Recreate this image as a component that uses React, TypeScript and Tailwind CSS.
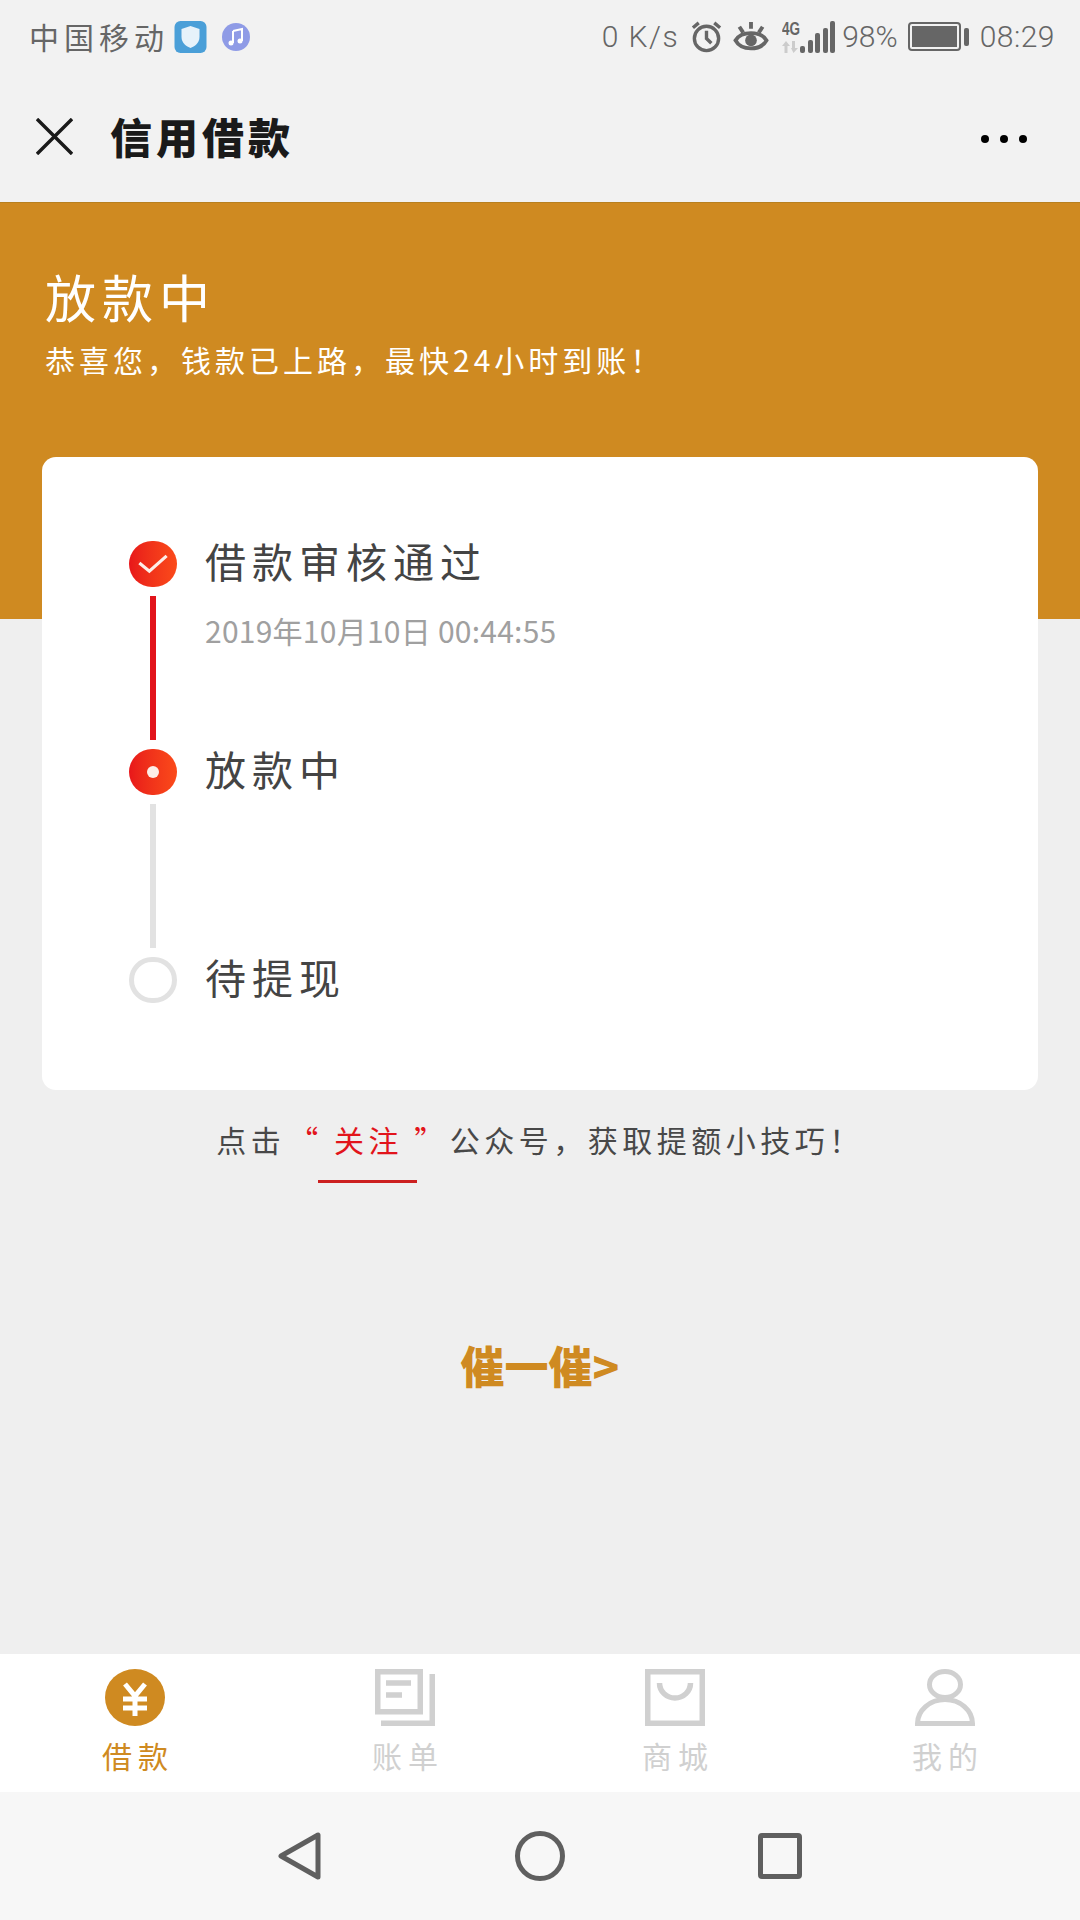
import type { ReactNode } from "react";

const cjk = "font-['Noto_Sans_CJK_SC','Noto_Sans',sans-serif]";

function StatusBar() {
  return (
    <div className="flex h-[70px] items-center justify-between bg-[#f2f2f2] pl-[29px] pr-[25px] pt-[3px] text-[#666666]">
      <div className="flex items-center">
        <span className={`${cjk} -mt-[2px] text-[30px] leading-none tracking-[5px]`}>中国移动</span>
        <svg viewBox="0 0 32 32" className="ml-[5px] h-8 w-[33px]">
          <rect width="32" height="32" rx="6" fill="#4a9fd8" />
          <path d="M16 5 L25 8 V16 C25 22 20 25.500 16 27 C12 25.500 7 22 7 16 V8 Z" fill="#e6f2fa" />
        </svg>
        <svg viewBox="0 0 32 32" className="ml-[13px] h-8 w-8">
          <circle cx="16" cy="16" r="14" fill="#8f9be6" />
          <path d="M13 10 L22 8 V20" fill="none" stroke="#ffffff" strokeWidth="2" />
          <path d="M13 10 V22" fill="none" stroke="#ffffff" strokeWidth="2" />
          <circle cx="11" cy="22" r="2.500" fill="#ffffff" />
          <circle cx="20" cy="20" r="2.500" fill="#ffffff" />
        </svg>
      </div>
      <div className="flex items-center font-['Roboto',sans-serif] text-[30px] font-light leading-none">
        <span className="tracking-[1.500px]">0 K/s</span>
        <svg viewBox="0 0 32 34" className="ml-[11px] h-[33px] w-[33px]" fill="none" stroke="#666666" strokeWidth="3.500">
          <circle cx="16" cy="19" r="12.500" />
          <path d="M16 11 V19 L21 24" />
          <path d="M2 8 L8 3 M30 8 L24 3" />
        </svg>
        <svg viewBox="0 0 36 34" className="ml-[9px] h-[33px] w-[38px]" fill="none" stroke="#666666" strokeWidth="4">
          <path d="M2 21 C8 11 28 11 34 21 C28 32 8 32 2 21 Z" />
          <circle cx="18" cy="21" r="6" fill="#666666" stroke="none" />
          <path d="M18 2 V9 M6 7 L10 13 M30 7 L26 13" />
        </svg>
        <div className="relative ml-[12px] h-[33px] w-[18px]">
          <span className="absolute left-0 top-0 origin-top-left scale-x-75 font-['Liberation_Sans',sans-serif] text-[18px] font-bold leading-none">4G</span>
          <svg viewBox="0 0 18 12" className="absolute bottom-0 left-0 h-3 w-[18px]" fill="#cccccc">
            <path d="M4 0 L8 5 H5.500 V12 H2.500 V5 H0 Z M10 0 H13 V7 H16 L11.500 12 L9 7 H10 Z" />
          </svg>
        </div>
        <div className="flex h-[33px] items-end gap-[2.500px]">
          <div className="h-[7px] w-[5px] rounded-[2px] bg-[#666666]" />
          <div className="h-[13px] w-[5px] rounded-[2px] bg-[#666666]" />
          <div className="h-[20px] w-[5px] rounded-[2px] bg-[#666666]" />
          <div className="h-[25px] w-[5px] rounded-[2px] bg-[#666666]" />
          <div className="h-[32px] w-[5px] rounded-[2px] bg-[#666666]" />
        </div>
        <span className="ml-[7px]">98%</span>
        <div className="ml-[10px] h-[29px] w-[53px] rounded-[4px] border-2 border-[#666666] p-[2px]">
          <div className="h-full w-full bg-[#666666]" />
        </div>
        <div className="ml-[3px] h-[18px] w-[5px] rounded-[2px] bg-[#666666]" />
        <span className="ml-[11px] tracking-[0.5px]">08:29</span>
      </div>
    </div>
  );
}

function Header() {
  return (
    <div className="flex h-[132px] items-center justify-between bg-[#f2f2f2] pl-[36px] pr-[53px]">
      <div className="flex items-center">
        <svg viewBox="0 0 38 38" className="h-[37px] w-[37px]" stroke="#1a1a1a" strokeWidth="3.500">
          <path d="M1 1 L37 37 M37 1 L1 37" />
        </svg>
        <span className={`${cjk} ml-[37px] text-[42px] font-black leading-none tracking-[4px] text-[#1a1a1a]`}>信用借款</span>
      </div>
      <div className="mt-[5px] flex gap-[11px]">
        <div className="h-2 w-2 rounded-full bg-black" />
        <div className="h-2 w-2 rounded-full bg-black" />
        <div className="h-2 w-2 rounded-full bg-black" />
      </div>
    </div>
  );
}

type StepProps = {
  state: "done" | "active" | "todo";
  title: string;
  time?: string;
  line?: "red" | "gray";
};

function Step({ state, title, time, line }: StepProps) {
  return (
    <div className="flex">
      <div className="flex w-12 flex-col items-center">
        {state === "todo" ? (
          <div className="h-[46px] w-12 rounded-full border-[5px] border-[#e2e2e2]" />
        ) : (
          <div className="flex h-[46px] w-12 items-center justify-center rounded-full bg-gradient-to-r from-[#e8161a] to-[#fb4a1a]">
            {state === "done" ? (
              <svg viewBox="0 0 32 22" className="h-[20px] w-[30px]" fill="none" stroke="#fdeee8" strokeWidth="3.500">
                <path d="M1 10 L12 19 L31 2" />
              </svg>
            ) : (
              <div className="h-3 w-3 rounded-full bg-[#fdeee8]" />
            )}
          </div>
        )}
        {line && <div className={`my-[9px] h-36 w-[6px] ${line === "red" ? "bg-[#e2141b]" : "bg-[#e2e2e2]"}`} />}
      </div>
      <div className={`${cjk} -mt-[5px] ml-[28px] font-normal text-[#444444]`}>
        <div className="text-[41px] leading-[48px] tracking-[6px]">{title}</div>
        {time && <div className="mt-[30px] text-[30px] leading-[32px] tracking-[0.25px] text-[#a0a0a0]">{time}</div>}
      </div>
    </div>
  );
}

function Tab({ icon, label, active }: { icon: ReactNode; label: string; active?: boolean }) {
  return (
    <div className="flex flex-col items-center">
      {icon}
      <span className={`${cjk} -mr-[6px] mt-[11px] whitespace-nowrap text-[30px] leading-[36px] tracking-[6px] ${active ? "text-[#cf8a21]" : "text-[#d0d0d0]"}`}>
        {label}
      </span>
    </div>
  );
}

export default function App() {
  return (
    <div className="flex h-[1920px] w-[1080px] flex-col overflow-hidden bg-[#efefef]">
      <StatusBar />
      <Header />

      <main className="relative flex-1">
        <div className={`${cjk} h-[417px] border-t border-[#b8801f] bg-[#cf8a21] pl-[45px] pt-[63px] text-white`}>
          <div className="text-[51px] leading-[60px] tracking-[6px]">放款中</div>
          <div className="mt-[15px] text-[30px] leading-[36px] tracking-[4px]">恭喜您，钱款已上路，最快24小时到账！</div>
        </div>

        <div className="relative mx-[42px] -mt-[162px] h-[633px] rounded-[14px] bg-white pl-[87px] pt-[84px]">
          <Step state="done" title="借款审核通过" time="2019年10月10日 00:44:55" line="red" />
          <Step state="active" title="放款中" line="gray" />
          <Step state="todo" title="待提现" />
        </div>

        <div className={`${cjk} mt-[31px] flex justify-center text-[30px] leading-[36px] tracking-[4.500px] text-[#484848]`}>
          <span>点击</span>
          <div className="relative ml-[3px] text-[#e2141b]">
            <span>“ 关注 ”</span>
            <div className="absolute -bottom-[26px] left-[30px] h-[3px] w-[99px] bg-[#cc2020]" />
          </div>
          <span className="ml-[1px]">公众号，获取提额小技巧！</span>
        </div>

        <div className={`${cjk} mt-[184px] text-center text-[44px] font-black leading-[48px] text-[#cf8a21]`}>催一催&gt;</div>
      </main>

      <nav className="grid h-[138px] grid-cols-4 bg-white pt-[15px]">
        <Tab
          active
          label="借款"
          icon={
            <svg viewBox="0 0 60 57" className="h-[57px] w-[60px]">
              <ellipse cx="30" cy="28.500" rx="30" ry="28.500" fill="#cf8a21" />
              <path d="M20 15 L30 27 L40 15 M18 30 H42 M18 39 H42 M30 27 V47" fill="none" stroke="#ffffff" strokeWidth="5" />
            </svg>
          }
        />
        <Tab
          label="账单"
          icon={
            <svg viewBox="0 0 60 57" className="h-[57px] w-[60px]" fill="none" stroke="#d0d0d0" strokeWidth="5.500">
              <rect x="2.750" y="2.750" width="42.500" height="40" />
              <path d="M57.250 5 V54.250 H6" />
              <path d="M11 14 H36 M11 26 H27" />
            </svg>
          }
        />
        <Tab
          label="商城"
          icon={
            <svg viewBox="0 0 60 57" className="h-[57px] w-[60px]" fill="none" stroke="#d0d0d0" strokeWidth="5.500">
              <rect x="2.750" y="2.750" width="54.500" height="51.500" />
              <path d="M14.500 14 A15.500 15 0 0 0 45.500 14" />
            </svg>
          }
        />
        <Tab
          label="我的"
          icon={
            <svg viewBox="0 0 60 57" className="h-[57px] w-[60px]" fill="none" stroke="#d0d0d0" strokeWidth="5">
              <ellipse cx="30" cy="15.500" rx="15.500" ry="13" />
              <path d="M2.500 54.500 A27.500 24 0 0 1 57.500 54.500 Z" />
            </svg>
          }
        />
      </nav>

      <div className="flex h-[128px] items-center bg-[#f7f7f7] pl-[278px]">
        <svg viewBox="0 0 43 48" className="h-12 w-[43px]" fill="none" stroke="#5f5f5f" strokeWidth="5" strokeLinejoin="round">
          <path d="M3 24 L40 3 V45 Z" />
        </svg>
        <div className="ml-[194px] h-[50px] w-[50px] rounded-full border-[5px] border-[#5f5f5f]" />
        <div className="ml-[193px] h-[46px] w-[44px] rounded-[4px] border-[5px] border-[#5f5f5f]" />
      </div>
    </div>
  );
}
